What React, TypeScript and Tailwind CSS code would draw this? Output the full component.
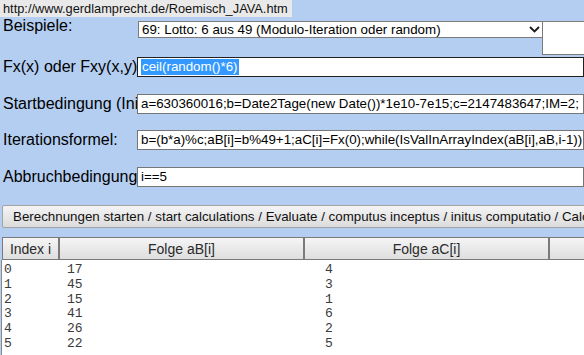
import React from "react";

const inputBase =
  "h-[20px] w-[470px] bg-white border flex items-center pl-[3px] text-[13.33px] leading-[16px] whitespace-nowrap overflow-hidden";

function Row({
  label,
  children,
  className = "",
}: {
  label: string;
  children: React.ReactNode;
  className?: string;
}) {
  return (
    <div className={"flex items-center h-[20px] " + className}>
      <div className="w-[137px] shrink-0 pl-[3px] text-[16px] leading-[18px] whitespace-nowrap overflow-hidden">
        {label}
      </div>
      {children}
    </div>
  );
}

const rows: [string, string, string][] = [
  ["0", "17", "4"],
  ["1", "45", "3"],
  ["2", "15", "1"],
  ["3", "41", "6"],
  ["4", "26", "2"],
  ["5", "22", "5"],
];

export default function App() {
  return (
    <div className="w-[584px] h-[355px] overflow-hidden bg-[#b4cef2] font-['Liberation_Sans',Arial,sans-serif] text-black">
      <div className="flex">
        <div className="h-[17px] bg-[#e9e9e9] pl-[3px] pr-[4px] text-[12.8px] leading-[17px] text-[#111] whitespace-nowrap">
          http://www.gerdlamprecht.de/Roemisch_JAVA.htm
        </div>
      </div>

      <div className="flex items-start h-[38px]">
        <div className="w-[138px] shrink-0 pl-[3px] text-[16px] leading-[18px] whitespace-nowrap">
          Beispiele:
        </div>
        <div className="mt-[4px] w-[405px] h-[17px] shrink-0 bg-white border border-[#7a7a7a] flex items-center pl-[3px] pr-[2px] text-[13.33px] leading-[15px] whitespace-nowrap">
          <span className="flex-1 overflow-hidden">69: Lotto: 6 aus 49 (Modulo-Iteration oder random)</span>
          <svg width="11" height="7" viewBox="0 0 11 7" className="shrink-0">
            <path d="M1 1 L5.5 5.5 L10 1" fill="none" stroke="#1a1a1a" strokeWidth="1.8" />
          </svg>
        </div>
        <div className="mt-[4px] -ml-px w-[60px] h-[34px] shrink-0 bg-white border border-[#7a7a7a]" />
      </div>

      <Row label="Fx(x) oder Fxy(x,y)" className="mt-[2px]">
        <div className={inputBase + " border-[#202020] pl-[2px]"}>
          <span className="bg-[#3399ff] text-white px-[1px]">ceil(random()*6)</span>
        </div>
      </Row>

      <Row label="Startbedingung (Initialisierung)" className="mt-[17px]">
        <div className={inputBase + " border-[#767676]"}>
          a=630360016;b=Date2Tage(new Date())*1e10-7e15;c=2147483647;IM=2;
        </div>
      </Row>

      <Row label="Iterationsformel:" className="mt-[16px]">
        <div className={inputBase + " border-[#767676]"}>
          b=(b*a)%c;aB[i]=b%49+1;aC[i]=Fx(0);while(IsValInArrayIndex(aB[i],aB,i-1))
        </div>
      </Row>

      <Row label="Abbruchbedingung" className="mt-[17px]">
        <div className={inputBase + " border-[#767676]"}>i==5</div>
      </Row>

      <div className="mt-[18px] ml-[2px] w-[600px] h-[23px] rounded-[2px] border border-[#a3a3a3] bg-gradient-to-b from-[#f4f4f4] to-[#dcdcdc] flex items-center pl-[10px] text-[13.33px] leading-[16px] text-[#111] whitespace-nowrap overflow-hidden">
        Berechnungen starten / start calculations / Evaluate / computus inceptus / initus computatio / Calcolo avviato
      </div>

      <div className="mt-[9px] ml-[2px] flex h-[23px] text-[14px] leading-[16px] text-[#2a2a2a]">
        <div className="w-[58px] shrink-0 border border-[#7a7a7a] border-r-2 bg-gradient-to-b from-[#f5f5f5] to-[#dedede] flex items-center justify-center">
          Index i
        </div>
        <div className="w-[245px] shrink-0 border-y border-r-2 border-[#7a7a7a] bg-gradient-to-b from-[#f5f5f5] to-[#dedede] flex items-center justify-center">
          Folge aB[i]
        </div>
        <div className="w-[245px] shrink-0 border-y border-r-2 border-[#7a7a7a] bg-gradient-to-b from-[#f5f5f5] to-[#dedede] flex items-center justify-center">
          Folge aC[i]
        </div>
        <div className="w-[60px] shrink-0 border-y border-[#7a7a7a] bg-gradient-to-b from-[#f5f5f5] to-[#dedede]" />
      </div>

      <div className="ml-px h-[120px] bg-white border-l border-[#8a8a8a] pt-[3px] font-['Liberation_Mono','Courier_New',monospace] text-[13px] leading-[14.8px] text-[#3a3a3a]">
        {rows.map(([a, b, c]) => (
          <div key={a} className="grid grid-cols-[63px_258px_1fr] pl-[2px]">
            <span>{a}</span>
            <span>{b}</span>
            <span>{c}</span>
          </div>
        ))}
      </div>
    </div>
  );
}
